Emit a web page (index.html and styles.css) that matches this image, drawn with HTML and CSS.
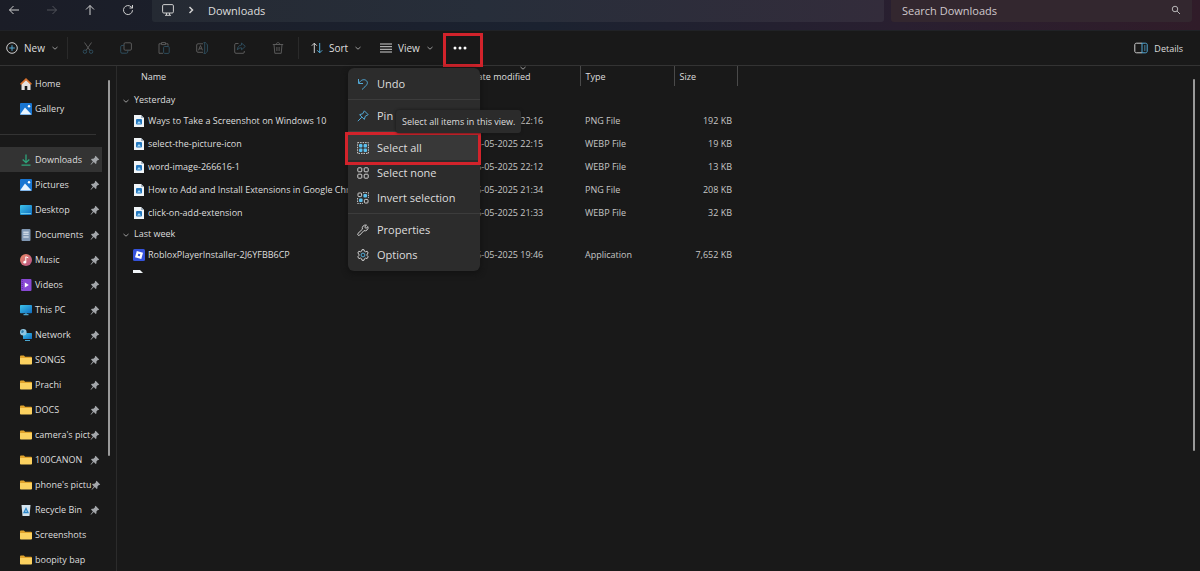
FILE: index.html
```html
<!DOCTYPE html>
<html lang="en">
  <head>
    <meta charset="utf-8">
    <title>Downloads</title>
    <link rel="stylesheet" href="styles.css">
  </head>
  <body>
    <svg class="sprite" aria-hidden="true">
      <defs>
        <linearGradient id="gradBlue" x1="0" y1="0" x2="1" y2="1">
          <stop offset="0" stop-color="#3fc4ea" />
          <stop offset="1" stop-color="#0f6cc0" />
        </linearGradient>
        <linearGradient id="gradMusic" x1="0" y1="0" x2="1" y2="1">
          <stop offset="0" stop-color="#ec8a62" />
          <stop offset="1" stop-color="#b5518a" />
        </linearGradient>
      </defs>
      <symbol id="i-chevron" viewBox="0 0 8 8"><path d="M1.500 3l2.500 2.200L6.500 3" /></symbol>
      <symbol id="i-pin" viewBox="0 0 10 10">
        <path d="M5.600.8l3.600 3.600-.7.7-.6-.1-1.500 1.600.1 1.600-.8.7-1.900-1.900L1 9.800l-.5-.4 2.400-3L1 4.500l.8-.8 1.600.1L5 2.200l-.1-.7z" fill="#a3a6aa" />
      </symbol>
      <symbol id="i-folder" viewBox="0 0 12 12">
        <path d="M0 2.500c0-.6.300-1 .9-1h3l1.200 1.200h5.900c.6 0 1 .3 1 .9v1H0z" fill="#e0a32c" />
        <path d="M0 4h12v5.700c0 .5-.4.800-.9.800H.9c-.5 0-.9-.3-.9-.8z" fill="#fbd160" />
      </symbol>
      <symbol id="i-picture" viewBox="0 0 12 12">
        <rect width="12" height="12" rx="1" fill="#1976d2" />
        <path d="M0 11.500L5 4.500l6.500 7z" fill="#e8f4ff" />
        <circle cx="9" cy="3.200" r="1.200" fill="#fff" />
      </symbol>
      <symbol id="i-file" viewBox="0 0 10 12">
        <path d="M0 0h7l3 3v9H0z" fill="#f1f5f8" />
        <path d="M7 0l3 3H7z" fill="#a9b6c2" />
        <rect x="2" y="4" width="6" height="5.500" rx="1" fill="#2478bf" />
        <path d="M3 8.500l2-2.500 2 2.500z" fill="#a8daf5" />
      </symbol>
    </svg>

    <div class="window">
      <header class="titlebar">
        <button class="nav-btn" aria-label="Back"><svg viewBox="0 0 12 12"><path d="M11 6H1.500M5.500 2l-4 4 4 4" /></svg></button>
        <button class="nav-btn off" aria-label="Forward"><svg viewBox="0 0 12 12"><path d="M1 6h9.500M6.500 2l4 4-4 4" /></svg></button>
        <button class="nav-btn" aria-label="Up"><svg viewBox="0 0 12 12"><path d="M6 11V1.500M2 5.500l4-4 4 4" /></svg></button>
        <button class="nav-btn" aria-label="Refresh"><svg viewBox="0 0 12 12"><path d="M10.500 6.200A4.500 4.500 0 1 1 9.300 3L10.500 4M10.500 1v3h-3" /></svg></button>
        <div class="address">
          <svg class="pc" viewBox="0 0 12 12"><rect x=".6" y=".6" width="10.800" height="8.400" rx="1.200" /><path d="M4.500 9v2M7.500 9v2M3 11.300h6" /></svg>
          <svg class="crumb" viewBox="0 0 8 8"><path d="M2.500 1l3 3-3 3" /></svg>
          <a href="#">Downloads</a>
        </div>
        <div class="search">
          <input type="text" placeholder="Search Downloads" aria-label="Search Downloads">
          <svg viewBox="0 0 12 12"><circle cx="4.800" cy="4.800" r="3.300" /><path d="M7.300 7.300l3.500 3.500" /></svg>
        </div>
      </header>

      <div class="toolbar">
        <button class="tool new">
          <svg viewBox="0 0 12 12"><circle cx="6" cy="6" r="5.300" /><path class="blue" d="M6 3.200v5.600M3.200 6h5.600" /></svg>
          New
          <svg class="chev"><use href="#i-chevron" /></svg>
        </button>
        <div class="group">
          <button class="icon-btn" aria-label="Cut"><svg viewBox="0 0 12 12"><path d="M2.500.5l5.500 8M9.500.5L4 8.500" /><g class="blue"><circle cx="2.900" cy="9.700" r="1.700" /><circle cx="9.100" cy="9.700" r="1.700" /></g></svg></button>
          <button class="icon-btn" aria-label="Copy"><svg viewBox="0 0 12 12"><rect x="4" y=".8" width="7.400" height="7.400" rx="1.200" /><path class="blue" d="M4 3.500H2A1.300 1.300 0 0 0 .7 4.800v5A1.300 1.300 0 0 0 2 11.200h4.500A1.300 1.300 0 0 0 7.800 10V8.200" /></svg></button>
          <button class="icon-btn" aria-label="Paste"><svg viewBox="0 0 12 12"><path d="M5 11.300H1V1.800h2.500M7.500 1.800H10v2M3.500.6h4v2h-4z" /><rect class="blue" x="5.600" y="4.500" width="5.600" height="6.900" rx="1" /></svg></button>
          <button class="icon-btn" aria-label="Rename"><svg viewBox="0 0 12 12"><path d="M7 1.800H2A1.300 1.300 0 0 0 .7 3v6A1.300 1.300 0 0 0 2 10.300h5M2.500 8.300L4.500 3.500l2 4.800M3.200 6.800h2.600" /><path class="blue" d="M7.500.6h2.400M7.500 11.400h2.400M8.700.6v10.800M10 1.800c1 0 1.400.5 1.400 1.200v6c0 .7-.4 1.300-1.400 1.300" /></svg></button>
          <button class="icon-btn" aria-label="Share"><svg viewBox="0 0 12 12"><path d="M4.500 1.500H2A1.300 1.300 0 0 0 .7 2.800V10A1.300 1.300 0 0 0 2 11.300h7A1.300 1.300 0 0 0 10.300 10V9" /><path class="blue" d="M7.500 1l3.800 3.400-3.800 3.400V5.800C5.500 5.700 4.300 6.500 3.300 8c.1-2.800 1.500-4.700 4.200-5z" /></svg></button>
          <button class="icon-btn" aria-label="Delete"><svg viewBox="0 0 12 12"><path d="M.8 2.500h10.400M4.200 2.500c0-2.500 3.600-2.500 3.600 0M2 2.500l.8 8.800h6.400L10 2.500M4.900 5v4M7.100 5v4" /></svg></button>
        </div>
        <button class="tool sort">
          <svg viewBox="0 0 12 12"><path d="M3.300 11V1.200M.8 3.700l2.500-2.500 2.500 2.500" /><path class="blue" d="M8.700 1v9.800M6.200 8.300l2.500 2.500 2.500-2.500" /></svg>
          Sort
          <svg class="chev"><use href="#i-chevron" /></svg>
        </button>
        <button class="tool view">
          <svg viewBox="0 0 12 12"><path d="M0 2h12M0 4.700h12M0 7.300h12M0 10h12" /></svg>
          View
          <svg class="chev"><use href="#i-chevron" /></svg>
        </button>
        <div class="more">
          <button class="more-btn" aria-label="See more"><svg viewBox="0 0 14 4"><circle cx="2" cy="2" r="1.500" /><circle cx="7" cy="2" r="1.500" /><circle cx="12" cy="2" r="1.500" /></svg></button>
          <div class="menu">
            <button><svg viewBox="0 0 12 12"><path class="blue" d="M1.500 1v4.500H6M1.800 5.200C4 1.500 7.500.8 9.500 2.800c2.300 2.500 0 4.700-4.500 8.700" /></svg>Undo</button>
            <hr>
            <button><svg viewBox="0 0 12 12"><path class="blue" d="M7.300.8l3.900 3.900-.9.500-2 1-1 3.200-4.700-4.700 3.200-1 1-2zM4.800 7.200L.8 11.200" /></svg>Pin</button>
            <hr>
            <button class="current">
              <svg viewBox="0 0 12 12"><rect x=".6" y=".6" width="10.800" height="10.800" stroke-dasharray="1.500 1" /><g class="fill"><rect x="2" y="2" width="3.400" height="3.400" rx="1" /><rect x="6.600" y="2" width="3.400" height="3.400" rx="1" /><rect x="2" y="6.600" width="3.400" height="3.400" rx="1" /><rect x="6.600" y="6.600" width="3.400" height="3.400" rx="1" /></g></svg>Select all
            </button>
            <button><svg viewBox="0 0 12 12"><rect x=".8" y=".8" width="4" height="4" rx=".8" /><rect x="7.200" y=".8" width="4" height="4" rx=".8" /><rect x=".8" y="7.200" width="4" height="4" rx=".8" /><rect x="7.200" y="7.200" width="4" height="4" rx=".8" /></svg>Select none</button>
            <button><svg viewBox="0 0 12 12"><path d="M6 .6h5.400V6M.6 6v5.400H6" stroke-dasharray="1.500 1" /><rect x="1" y="1" width="3.600" height="3.600" rx=".8" /><rect x="7.400" y="7.400" width="3.600" height="3.600" rx=".8" /><g class="fill"><rect x="6.400" y="2" width="3.600" height="3.600" rx="1" /><rect x="2" y="6.400" width="3.600" height="3.600" rx="1" /></g></svg>Invert selection</button>
            <hr>
            <button><svg viewBox="0 0 12 12"><path d="M9.500 1.200a3.200 3.200 0 0 0-4.100 4L1 9.400a1.200 1.200 0 0 0 1.700 1.700l4.200-4.400a3.200 3.200 0 0 0 4-4.100L9 4.400 7.600 3z" /></svg>Properties</button>
            <button><svg viewBox="0 0 12 12"><path d="M5 .7h2l.4 1.500 1.200.6 1.500-.6 1.100 1.800-1.100 1.100v1.500l1.100 1.200-1.100 1.800-1.500-.5-1.200.7-.4 1.500H5l-.4-1.500-1.200-.7-1.500.5L.8 7.800l1.100-1.200V5.100L.8 4l1.100-1.800 1.500.6 1.200-.6z" /><circle class="blue" cx="6" cy="6" r="1.900" /></svg>Options</button>
            <div class="tooltip" role="tooltip">Select all items in this view.</div>
          </div>
        </div>
        <button class="tool details">
          <svg viewBox="0 0 14 12"><path d="M8 1.200H2.500C1.400 1.200.8 1.800.8 2.800v6.400c0 1 .6 1.600 1.700 1.600H8" /><path class="blue" d="M8 1.200h3.500c1.100 0 1.700.6 1.700 1.600v6.400c0 1-.6 1.600-1.700 1.600H8zM10 4h1.500M10 6h1.500M10 8h1.500" /></svg>
          Details
        </button>
      </div>

      <main class="content">
        <aside class="sidebar">
          <nav>
            <a href="#"><svg viewBox="0 0 12 12"><path d="M1.500 5.500L6 1.500l4.500 4V12H7.300V8H4.700v4H1.500z" fill="#e6e2df" /><path d="M.6 6.300L6 1.200l5.400 5.100" fill="none" stroke="#d9722e" stroke-width="1.600" /></svg><span>Home</span></a>
            <a href="#"><svg><use href="#i-picture" /></svg><span>Gallery</span></a>
            <hr>
            <a href="#" class="active"><svg viewBox="0 0 12 12"><path d="M6 .5v8M2.700 5.500L6 8.700l3.300-3.200M1.500 11.200h9" fill="none" stroke="#2fa57c" stroke-width="1.300" /></svg><span>Downloads</span><svg class="pin"><use href="#i-pin" /></svg></a>
            <a href="#"><svg><use href="#i-picture" /></svg><span>Pictures</span><svg class="pin"><use href="#i-pin" /></svg></a>
            <a href="#"><svg viewBox="0 0 12 12"><rect y="1" width="12" height="10" rx="1" fill="url(#gradBlue)" /><path d="M1 9.500h10" stroke="#7fdcf5" stroke-width=".8" /></svg><span>Desktop</span><svg class="pin"><use href="#i-pin" /></svg></a>
            <a href="#"><svg viewBox="0 0 12 12"><rect x="1.500" width="9" height="12" rx="1" fill="#8097b2" /><path d="M3.300 3.200h5.400M3.300 5.200h5.400M3.300 8h5.400" stroke="#eef4fa" stroke-width="1" /></svg><span>Documents</span><svg class="pin"><use href="#i-pin" /></svg></a>
            <a href="#"><svg viewBox="0 0 12 12"><circle cx="6" cy="6" r="6" fill="url(#gradMusic)" /><path d="M5.800 8V2.800l2.500 1" fill="none" stroke="#fff" /><circle cx="4.800" cy="8.200" r="1.400" fill="#fff" /></svg><span>Music</span><svg class="pin"><use href="#i-pin" /></svg></a>
            <a href="#"><svg viewBox="0 0 12 12"><rect x="1" width="10.500" height="12" rx="1" fill="#8848d4" /><path d="M2.200 1v10" stroke="#5d2aa3" stroke-dasharray="1 1" /><path d="M4.800 3.600L8.800 6l-4 2.400z" fill="#fff" /></svg><span>Videos</span><svg class="pin"><use href="#i-pin" /></svg></a>
            <a href="#"><svg viewBox="0 0 12 12"><rect y="1" width="12" height="8.300" rx=".8" fill="url(#gradBlue)" /><path d="M3.500 10.700h5M6 9v1.500" stroke="#4ba6cf" stroke-width="1.200" /></svg><span>This PC</span><svg class="pin"><use href="#i-pin" /></svg></a>
            <a href="#"><svg viewBox="0 0 12 12"><rect x="3" y="4" width="9" height="6" rx=".6" fill="url(#gradBlue)" /><path d="M5 11.500h5" stroke="#4ba6cf" /><circle cx="3.300" cy="3.300" r="3.300" fill="#8fc6e2" /><path d="M2 1l2 1-1 2-2-.5zM4.500 3.500l1.500 1" fill="#2c7cab" /></svg><span>Network</span><svg class="pin"><use href="#i-pin" /></svg></a>
            <a href="#"><svg><use href="#i-folder" /></svg><span>SONGS</span><svg class="pin"><use href="#i-pin" /></svg></a>
            <a href="#"><svg><use href="#i-folder" /></svg><span>Prachi</span><svg class="pin"><use href="#i-pin" /></svg></a>
            <a href="#"><svg><use href="#i-folder" /></svg><span>DOCS</span><svg class="pin"><use href="#i-pin" /></svg></a>
            <a href="#"><svg><use href="#i-folder" /></svg><span>camera's pict</span><svg class="pin"><use href="#i-pin" /></svg></a>
            <a href="#"><svg><use href="#i-folder" /></svg><span>100CANON</span><svg class="pin"><use href="#i-pin" /></svg></a>
            <a href="#"><svg><use href="#i-folder" /></svg><span>phone's pictu</span><svg class="pin"><use href="#i-pin" /></svg></a>
            <a href="#"><svg viewBox="0 0 12 12"><path d="M1.500 1h9l-1 11h-7z" fill="#d3e3ee" /><path d="M4 8.500L6 4.500l2 4z" fill="none" stroke="#2b86c9" stroke-width="1.300" /></svg><span>Recycle Bin</span><svg class="pin"><use href="#i-pin" /></svg></a>
            <a href="#"><svg><use href="#i-folder" /></svg><span>Screenshots</span></a>
            <a href="#"><svg><use href="#i-folder" /></svg><span>boopity bap</span></a>
          </nav>
          <div class="scrollbar"></div>
        </aside>

        <section class="files">
          <table>
            <colgroup>
              <col class="c-name">
              <col class="c-date">
              <col class="c-type">
              <col class="c-size">
            </colgroup>
            <thead>
              <tr>
                <th>Name</th>
                <th class="sorted">Date modified<svg class="chev"><use href="#i-chevron" /></svg></th>
                <th>Type</th>
                <th>Size</th>
              </tr>
            </thead>
            <tbody>
              <tr class="group-row first"><td colspan="4"><svg class="chev"><use href="#i-chevron" /></svg>Yesterday</td></tr>
              <tr><td><svg class="file"><use href="#i-file" /></svg>Ways to Take a Screenshot on Windows 10</td><td>26-05-2025 22:16</td><td>PNG File</td><td>192 KB</td></tr>
              <tr><td><svg class="file"><use href="#i-file" /></svg>select-the-picture-icon</td><td>26-05-2025 22:15</td><td>WEBP File</td><td>19 KB</td></tr>
              <tr><td><svg class="file"><use href="#i-file" /></svg>word-image-266616-1</td><td>26-05-2025 22:12</td><td>WEBP File</td><td>13 KB</td></tr>
              <tr><td><svg class="file"><use href="#i-file" /></svg>How to Add and Install Extensions in Google Chrome</td><td>26-05-2025 21:34</td><td>PNG File</td><td>208 KB</td></tr>
              <tr><td><svg class="file"><use href="#i-file" /></svg>click-on-add-extension</td><td>26-05-2025 21:33</td><td>WEBP File</td><td>32 KB</td></tr>
            </tbody>
            <tbody>
              <tr class="group-row"><td colspan="4"><svg class="chev"><use href="#i-chevron" /></svg>Last week</td></tr>
              <tr><td><svg class="file" viewBox="0 0 12 12"><rect width="12" height="12" rx="1.500" fill="#3553dc" /><path d="M3.800 2l6.200 1.700L8.300 10 2 8.300zM5.300 4.800l-.5 2 2 .5.500-2z" fill="#fff" fill-rule="evenodd" /></svg>RobloxPlayerInstaller-2J6YFBB6CP</td><td>26-05-2025 19:46</td><td>Application</td><td>7,652 KB</td></tr>
            </tbody>
          </table>
          <div class="cut-row"><svg viewBox="0 0 10 3"><path d="M0 0h7l3 3H0z" fill="#f1f5f8" /></svg></div>
          <div class="scrollbar"></div>
        </section>
      </main>
    </div>
  </body>
</html>
```

FILE: styles.css
```css
* {
  box-sizing: border-box;
}
body {
  margin: 0;
  background: #191919;
  color: #dedede;
  font-family: "Open Sans", "Noto Sans", sans-serif;
  font-size: 9px;
}
a {
  color: inherit;
  text-decoration: none;
}
button {
  display: flex;
  align-items: center;
  padding: 0;
  border: 0;
  background: none;
  color: inherit;
  font: inherit;
}
svg {
  flex: none;
  width: 12px;
  height: 12px;
}
.sprite {
  position: absolute;
  width: 0;
  height: 0;
}
.window {
  display: flex;
  flex-direction: column;
  height: 100vh;
  overflow: hidden;
}

/* title bar */
.titlebar {
  display: flex;
  flex: none;
  height: 30px;
  padding: 0 8px;
  background: linear-gradient(90deg, #1b1d27, #1b2230 45%, #291f30 75%, #301c29);
}
.titlebar svg,
.toolbar svg {
  fill: none;
  stroke: #d0d0d0;
  stroke-width: 1;
}
.nav-btn {
  height: 20px;
  margin-right: 26px;
}
.nav-btn.off {
  opacity: 0.3;
}
.nav-btn:nth-child(4) {
  margin-right: 18px;
}
.address,
.search {
  display: flex;
  align-items: center;
  height: 22px;
  padding-bottom: 2px;
  border-radius: 0 0 3px 3px;
  font-size: 11px;
}
.address {
  flex: 1;
  gap: 13px;
  padding-left: 10px;
  background: linear-gradient(90deg, #252a33, #272e3a 45%, #332c3b);
}
.address .crumb {
  width: 8px;
  height: 8px;
  stroke-width: 1.5;
}
.search {
  width: 301px;
  margin-left: 7px;
  padding-left: 11px;
  padding-right: 11px;
  background: #33272f;
}
.search input {
  flex: 1;
  min-width: 0;
  padding: 0;
  border: 0;
  background: none;
  color: #cfc8cc;
  font: inherit;
}
.search input::placeholder {
  color: #cfc8cc;
}
.search svg {
  width: 10px;
  height: 10px;
}

/* command bar */
.toolbar {
  display: flex;
  flex: none;
  align-items: center;
  height: 36px;
  padding: 0 17px 0 6px;
  border-top: 1px solid #202226;
  border-bottom: 1px solid #333;
}
.toolbar .blue {
  stroke: #52a9d6;
}
.toolbar .fill {
  fill: #5cc0ee;
  stroke: none;
}
.toolbar svg.chev,
.files svg.chev {
  width: 8px;
  height: 8px;
  fill: none;
  stroke: #9a9a9a;
}
.tool {
  gap: 6px;
  font-size: 10px;
}
.new {
  width: 61px;
}
.group {
  display: flex;
  gap: 26px;
  margin-right: 12px;
  padding: 5px 14px;
  border: solid #2a2a2a;
  border-width: 0 1px;
}
.icon-btn {
  opacity: 0.35;
}
.sort {
  width: 69px;
}
.view {
  width: 63px;
}
.more {
  position: relative;
  z-index: 1;
}
.more-btn {
  justify-content: center;
  width: 40px;
  height: 34px;
  padding-right: 6px;
}
.more-btn::after {
  content: "";
  position: absolute;
  inset: 2px 0 -2px;
  border: 3px solid #d2232b;
}
.more-btn svg {
  width: 14px;
  height: 4px;
  fill: #fff;
  stroke: none;
}
.details {
  margin-left: auto;
  font-size: 9px;
}
.details svg {
  width: 14px;
}

/* more menu */
.menu {
  position: absolute;
  top: 37px;
  left: -95px;
  width: 132px;
  padding: 3px 0 4px;
  border-radius: 6px;
  background: #2c2c2c;
  box-shadow: 0 2px 6px #111;
  font-size: 11px;
}
.menu button {
  gap: 8px;
  width: 100%;
  height: 25px;
  padding-left: 9px;
}
.menu hr {
  height: 1px;
  margin: 3px 0;
  border: 0;
  background: #3c3c3c;
}
.menu .current {
  position: relative;
  background: #383838;
}
.menu .current::after {
  content: "";
  position: absolute;
  inset: -3px -1px -5px -3px;
  border: 3px solid #d2232b;
}
.tooltip {
  position: absolute;
  top: 42px;
  left: 48px;
  padding: 0 6px;
  border-radius: 3px;
  background: #2b2b2b;
  box-shadow: 0 0 3px #151515;
  font-size: 9px;
  line-height: 23px;
  white-space: nowrap;
}

.content {
  display: flex;
  flex: 1;
  min-height: 0;
}
.scrollbar {
  width: 2px;
  border-radius: 1px;
  background: #9a9a9a;
}

/* navigation pane */
.sidebar {
  display: flex;
  flex: none;
  width: 117px;
  overflow: hidden;
  border-right: 1px solid #2b2b2b;
}
.sidebar nav {
  width: 102px;
  padding-top: 5px;
}
.sidebar a {
  display: flex;
  align-items: center;
  height: 25px;
  padding: 0 2px 0 20px;
}
.sidebar span {
  flex: 1;
  margin-left: 3px;
  white-space: nowrap;
}
.sidebar .active {
  background: #333;
}
.sidebar .pin {
  width: 10px;
  height: 10px;
}
.sidebar hr {
  height: 1px;
  margin: 13px 6px 12px 0;
  border: 0;
  background: #333;
}
.sidebar .scrollbar {
  height: 376px;
  margin: 14px 0 0 6px;
}

/* file list */
.files {
  position: relative;
  flex: 1;
  overflow: hidden;
}
table {
  width: 620px;
  border-collapse: collapse;
  table-layout: fixed;
}
.c-name {
  width: 349px;
}
.c-date {
  width: 114px;
}
.c-type {
  width: 94px;
}
.c-size {
  width: 63px;
}
th,
td {
  height: 23px;
  padding: 0 5px;
  font-weight: normal;
  text-align: left;
  white-space: nowrap;
}
th {
  position: relative;
  height: 20px;
  border-right: 1px solid #4a4a4a;
}
th:first-child {
  padding-left: 24px;
  border: 0;
}
th .chev {
  position: absolute;
  top: -2px;
  left: 53px;
}
td {
  color: #c6c6c6;
}
td:first-child {
  padding-left: 16px;
  color: #dedede;
}
td:last-child {
  text-align: right;
}
td .file {
  width: 12px;
  height: 12px;
  margin-right: 3px;
  vertical-align: middle;
}
.group-row td:first-child {
  height: 19px;
  padding-left: 5px;
  text-align: left;
}
.group-row.first td {
  height: 23px;
  padding-top: 4px;
}
.group-row .chev {
  margin-right: 4px;
  vertical-align: middle;
}
.cut-row {
  display: flex;
  padding: 4px 16px;
}
.cut-row svg {
  width: 10px;
  height: 3px;
}
.files .scrollbar {
  position: absolute;
  top: 13px;
  right: 5px;
  height: 372px;
}
```
